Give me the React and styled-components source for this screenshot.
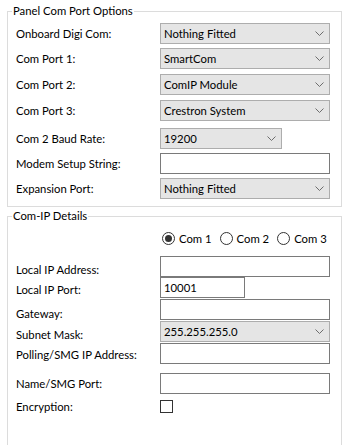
import React from 'react'
import styled, { createGlobalStyle } from 'styled-components'

const GlobalStyle = createGlobalStyle`
body {
  margin: 0;
  background: #fff;
  overflow: hidden;
  font-family: Lato, "Liberation Sans", Arial, sans-serif;
  font-size: 11.3px;
  color: #000;
}
`

const Page = styled.div`
display: flex;
flex-direction: column;
padding: 0 7px;
`

const Group = styled.fieldset`
margin: ${props => props.$mt}px 0 0 0;
padding: 4px 8px ${props => props.$pb}px 8px;
border: 1px solid #dcdcdc;
min-width: 0;
display: flex;
flex-direction: column;
`

const Legend = styled.legend`
padding: 0 1px;
margin-left: -4px;
line-height: 16px;
`

const Row = styled.div`
display: flex;
align-items: center;
height: 21px;
margin-top: ${props => props.$mt || 0}px;
`

const Label = styled.div`
width: 144px;
flex-shrink: 0;
white-space: nowrap;
padding-top: ${props => props.$dy || 0}px;
`

const SelectBox = styled.div`
box-sizing: border-box;
height: 21px;
width: ${props => props.$w || 170}px;
display: flex;
align-items: center;
justify-content: space-between;
padding: 0 5px 0 3px;
background: #e5e5e5;
border: 1px solid #adadad;
`

const Field = styled.div`
box-sizing: border-box;
height: 21px;
width: ${props => props.$w || 170}px;
display: flex;
align-items: center;
padding-left: 3px;
background: #fff;
border: 1px solid #7a7a7a;
`

const Radios = styled.div`
display: flex;
align-items: center;
gap: 8px;
padding-left: 2px;
white-space: nowrap;
`

const RadioItem = styled.label`
display: flex;
align-items: center;
gap: 4px;
flex-shrink: 0;
`

const RadioCircle = styled.span`
box-sizing: border-box;
width: 13px;
height: 13px;
border-radius: 50%;
border: 1px solid #333;
display: flex;
align-items: center;
justify-content: center;
&::after {
  content: '';
  width: 7px;
  height: 7px;
  border-radius: 50%;
  background: ${props => (props.$on ? '#333' : 'transparent')};
}
`

const CheckBox = styled.span`
box-sizing: border-box;
width: 13px;
height: 13px;
border: 1px solid #333;
background: #fff;
`

const Chevron = () => (
  <svg width="9" height="5" viewBox="0 0 9 5">
    <path d="M0.5 0.5 L4.5 4.5 L8.5 0.5" fill="none" stroke="#6d6d6d" strokeWidth="1" />
  </svg>
)

const Select = ({ value, w }) => (
  <SelectBox $w={w}>
    <span>{value}</span>
    <Chevron />
  </SelectBox>
)

const portRows = [
  { label: 'Onboard Digi Com:', value: 'Nothing Fitted', mt: 0 },
  { label: 'Com Port 1:', value: 'SmartCom', mt: 4 },
  { label: 'Com Port 2:', value: 'ComIP Module', mt: 5 },
  { label: 'Com Port 3:', value: 'Crestron System', mt: 5 },
]

export default function App() {
  return (
    <Page>
      <GlobalStyle />
      <Group $mt={3} $pb={7}>
        <Legend>Panel Com Port Options</Legend>
        {portRows.map(r => (
          <Row key={r.label} $mt={r.mt}>
            <Label>{r.label}</Label>
            <Select value={r.value} />
          </Row>
        ))}
        <Row $mt={7}>
          <Label>Com 2 Baud Rate:</Label>
          <Select value="19200" w={122} />
        </Row>
        <Row $mt={4}>
          <Label>Modem Setup String:</Label>
          <Field />
        </Row>
        <Row $mt={4}>
          <Label>Expansion Port:</Label>
          <Select value="Nothing Fitted" />
        </Row>
      </Group>

      <Group $mt={1} $pb={40}>
        <Legend>Com-IP Details</Legend>
        <Row>
          <Label />
          <Radios>
            <RadioItem><RadioCircle $on />Com 1</RadioItem>
            <RadioItem><RadioCircle />Com 2</RadioItem>
            <RadioItem><RadioCircle />Com 3</RadioItem>
          </Radios>
        </Row>
        <Row $mt={7}>
          <Label $dy={6}>Local IP Address:</Label>
          <Field />
        </Row>
        <Row>
          <Label $dy={4}>Local IP Port:</Label>
          <Field $w={85}>10001</Field>
        </Row>
        <Row $mt={1}>
          <Label $dy={8}>Gateway:</Label>
          <Field />
        </Row>
        <Row $mt={1}>
          <Label $dy={6}>Subnet Mask:</Label>
          <Select value="255.255.255.0" />
        </Row>
        <Row $mt={1}>
          <Label $dy={2}>Polling/SMG IP Address:</Label>
          <Field />
        </Row>
        <Row $mt={9}>
          <Label $dy={-4}>Name/SMG Port:</Label>
          <Field />
        </Row>
        <Row $mt={2}>
          <Label $dy={-2}>Encryption:</Label>
          <CheckBox />
        </Row>
      </Group>
    </Page>
  )
}
